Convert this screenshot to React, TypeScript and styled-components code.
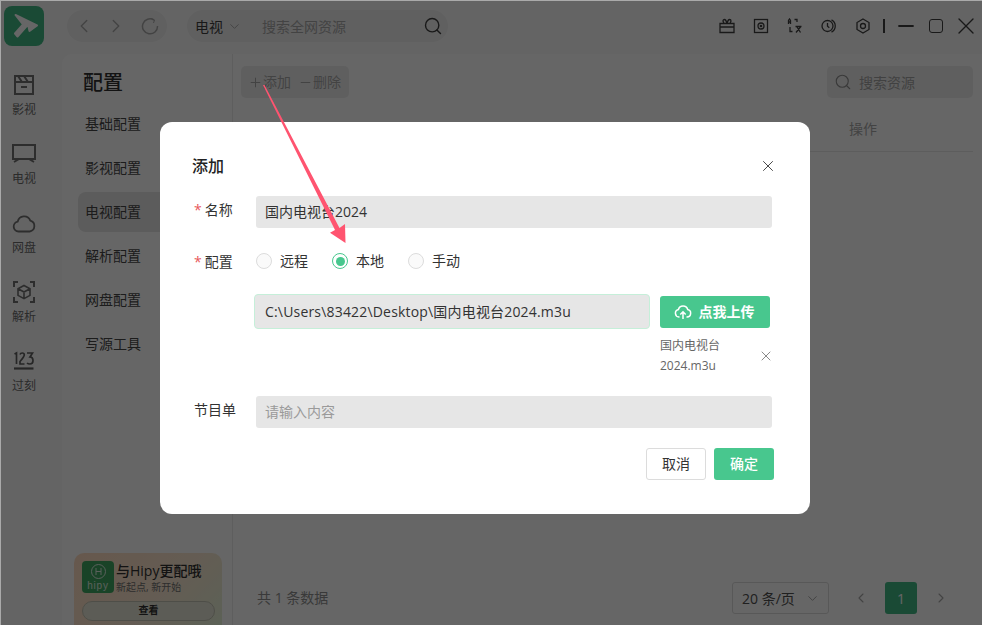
import React, { FunctionComponent } from "react";
import styled, { createGlobalStyle } from "styled-components";
import { ChevronDown, ChevronLeft, ChevronRight, Search, X, Plus, Minus } from "lucide-react";

const GlobalStyle = createGlobalStyle`
  html, body {
    margin: 0;
    padding: 0;
    height: 100%;
    overflow: hidden;
  }
  body {
    font-family: "Open Sans", "Noto Sans CJK SC", sans-serif;
    color: #222;
  }
  * {
    box-sizing: border-box;
  }
`;

const rail = [
  {
    label: "影视",
    icon: (
      <svg width="22" height="22" viewBox="0 0 22 22" fill="none" stroke="#707070" strokeWidth="2">
        <rect x="2" y="2" width="18" height="18" />
        <path d="M2 8h18M5 2l4 6M11 2l4 6M8 13h6" />
      </svg>
    ),
  },
  {
    label: "电视",
    icon: (
      <svg width="26" height="22" viewBox="0 0 26 22" fill="none" stroke="#707070" strokeWidth="2">
        <rect x="2" y="2" width="22" height="14" />
        <path d="M3 19l5-3M23 19l-5-3" />
      </svg>
    ),
  },
  {
    label: "网盘",
    icon: (
      <svg width="24" height="20" viewBox="0 0 24 20" fill="none" stroke="#707070" strokeWidth="1.8">
        <path d="M6.5 18.5a5 5 0 0 1-.8-9.9 6.6 6.6 0 0 1 12.6-1 5.6 5.6 0 0 1-.6 10.9z" />
      </svg>
    ),
  },
  {
    label: "解析",
    icon: (
      <svg width="24" height="24" viewBox="0 0 24 24" fill="none" stroke="#707070" strokeWidth="2">
        <path d="M2 7V2h4M18 2h4v5M2 17v5h4M22 17v5h-4" />
        <path d="M12 5.5l6 3.3v6.6l-6 3.3-6-3.3V8.8zM6.5 9l5.5 3 5.5-3M12 12v6" strokeWidth="1.6" />
      </svg>
    ),
  },
  {
    label: "过刻",
    icon: (
      <svg width="22" height="20" viewBox="0 0 22 20" fill="none" stroke="#606060" strokeWidth="1.7">
        <path d="M1.500 3l2-1v11M7 3.500q.5-1.500 2.300-1.500 2 0 2 2 0 1.500-4.300 6.500v2.500h4.500M14 2h5.500l-2.500 4q3 0 3 3.500T17 13q-2 0-3-1" />
        <path d="M1 17.500h19.500" strokeWidth="2.200" />
      </svg>
    ),
  },
];

const menuItems = ["基础配置", "影视配置", "电视配置", "解析配置", "网盘配置", "写源工具"];

export default function App() {
  return (
    <Page>
      <GlobalStyle />
      <Rail>
        <Logo>
          <svg width="40" height="40" viewBox="0 0 40 40">
            <path
              d="M11.500 9L33 19.500 25.500 25 24 18.500 13.500 30.500 11 27.500 19 18.500z"
              fill="#fff"
              stroke="#fff"
              strokeWidth="2"
              strokeLinejoin="round"
            />
          </svg>
        </Logo>
        <RailNav>
          {rail.map((item) => (
            <RailItem key={item.label}>
              <RailIcon>{item.icon}</RailIcon>
              <RailLabel>{item.label}</RailLabel>
            </RailItem>
          ))}
        </RailNav>
      </Rail>
      <Body>
        <TopBar>
          <NavPill>
            <ChevronLeft size={22} strokeWidth={1.5} color="#a8a8a8" />
            <ChevronRight size={22} strokeWidth={1.5} color="#a8a8a8" />
            <svg width="18" height="18" viewBox="0 0 18 18" fill="none" stroke="#a8a8a8" strokeWidth="1.500">
              <path d="M13 3a7.500 7.500 0 1 0 3.500 6" />
              <path d="M10 1.500l3.500 1.500-1 3" strokeWidth="1" />
            </svg>
          </NavPill>
          <SearchPill>
            <SearchType>电视</SearchType>
            <ChevronDown size={15} strokeWidth={1.500} color="#a8a8a8" />
            <SearchHint>搜索全网资源</SearchHint>
            <Search size={20} strokeWidth={1.700} color="#404040" />
          </SearchPill>
          <WinTools>
            <ToolIcon viewBox="0 0 16 16">
              <path d="M1 5.500h14V14.500H1zM1 9h14M5 5.500L4 3q0-1.500 1.500-1.500T8 5.500q1-4 2.500-4T12 3l-1 2.500" />
            </ToolIcon>
            <ToolIcon viewBox="0 0 16 16">
              <rect x="1.500" y="1.500" width="13" height="13" />
              <circle cx="8" cy="8" r="3" />
              <circle cx="8" cy="8" r=".7" />
            </ToolIcon>
            <ToolIcon viewBox="0 0 16 16">
              <path d="M1.500 6V2.500l1-1.500 1 1.500V6M1.500 4h2M7.500 1.500H10v2.500M3 9v4.500h2.500M8.500 8.500h6M10 9l3.500 5.500M13.500 9L9 14.500" />
            </ToolIcon>
            <ToolIcon viewBox="0 0 16 16">
              <circle cx="6.500" cy="8" r="5.500" />
              <path d="M6.500 5v3.200l1.800 1.500M10.500 1.800a7 7 0 0 1 0 12.400" />
            </ToolIcon>
            <ToolIcon viewBox="0 0 16 16">
              <path d="M8 1l6 3.500v7L8 15l-6-3.500v-7z" />
              <circle cx="8" cy="8" r="2.500" />
            </ToolIcon>
            <WinDivider />
            <WinButtons>
              <Minus size={24} strokeWidth={1.800} color="#404040" />
              <MaxBox />
              <X size={28} strokeWidth={1.200} color="#404040" />
            </WinButtons>
          </WinTools>
        </TopBar>
        <Panel>
          <SideMenu>
            <SideTitle>配置</SideTitle>
            <MenuList>
              {menuItems.map((item) => (
                <MenuItem key={item} $active={item === "电视配置"}>
                  {item}
                </MenuItem>
              ))}
            </MenuList>
            <Promo>
              <PromoTop>
                <PromoLogo>
                  <svg width="17" height="17" viewBox="0 0 17 17" fill="none" stroke="#e0f0e4" strokeWidth="1">
                    <circle cx="8.500" cy="8.500" r="7" />
                    <path d="M6 5v7M11 5v7M6 8.500h5" />
                  </svg>
                  <span>hipy</span>
                </PromoLogo>
                <div>
                  <PromoTitle>与Hipy更配哦</PromoTitle>
                  <PromoSub>新起点, 新开始</PromoSub>
                </div>
              </PromoTop>
              <PromoButton>查看</PromoButton>
            </Promo>
          </SideMenu>
          <Main>
            <MainBar>
              <ActionGroup>
                <Action>
                  <Plus size={15} strokeWidth={1.600} />
                  添加
                </Action>
                <Action>
                  <Minus size={15} strokeWidth={1.600} />
                  删除
                </Action>
              </ActionGroup>
              <TableSearch>
                <Search size={18} strokeWidth={1.500} color="#909090" />
                搜索资源
              </TableSearch>
            </MainBar>
            <TableHead>
              <span>操作</span>
            </TableHead>
            <TableFill />
            <Footer>
              <Total>共 1 条数据</Total>
              <Pager>
                <PageSize>
                  20 条/页
                  <ChevronDown size={15} strokeWidth={1.500} color="#a0a0a0" />
                </PageSize>
                <PageArrows>
                  <ChevronLeft size={16} strokeWidth={1.600} color="#a8a8a8" />
                  <PageCurrent>1</PageCurrent>
                  <ChevronRight size={16} strokeWidth={1.600} color="#a8a8a8" />
                </PageArrows>
              </Pager>
            </Footer>
          </Main>
        </Panel>
      </Body>
      <Backdrop />
      <AddDialog />
      <Arrow viewBox="0 0 982 625">
        <path d="M263 85L264.500 85L339.500 228L345 224L345.500 243L330 232.700L335 230z" fill="#ff5470" />
      </Arrow>
    </Page>
  );
}

const AddDialog: FunctionComponent = () => (
  <Dialog>
    <DialogHeader>
      <DialogTitle>添加</DialogTitle>
      <X size={18} strokeWidth={1.300} color="#444" />
    </DialogHeader>
    <Row $top={18}>
      <Label $required>名称</Label>
      <Input>国内电视台2024</Input>
    </Row>
    <RadioRow>
      <Label $required>配置</Label>
      <Radio>
        <RadioDot />
        <RadioText>远程</RadioText>
      </Radio>
      <Radio>
        <RadioDot $checked />
        <RadioText>本地</RadioText>
      </Radio>
      <Radio>
        <RadioDot />
        <RadioText>手动</RadioText>
      </Radio>
    </RadioRow>
    <UploadRow>
      <PathInput>C:\Users\83422\Desktop\国内电视台2024.m3u</PathInput>
      <UploadCol>
        <UploadButton>
          <svg width="18" height="18" viewBox="0 0 18 18" fill="none" stroke="#fff" strokeWidth="1.500">
            <path d="M5.500 14H5a3.800 3.800 0 0 1-.6-7.500 4.800 4.800 0 0 1 9.300 0A3.800 3.800 0 0 1 13 14h-.5" />
            <path d="M9 16V9M6.300 11.500L9 8.800l2.700 2.700" />
          </svg>
          <span>点我上传</span>
        </UploadButton>
        <FileEntry>
          <FileName>国内电视台2024.m3u</FileName>
          <X size={16} strokeWidth={1.300} color="#777" />
        </FileEntry>
      </UploadCol>
    </UploadRow>
    <Row $top={20}>
      <Label>节目单</Label>
      <Input $placeholder>请输入内容</Input>
    </Row>
    <DialogFooter>
      <CancelButton>取消</CancelButton>
      <ConfirmButton>确定</ConfirmButton>
    </DialogFooter>
  </Dialog>
);

const Page = styled.div`
  position: relative;
  width: 982px;
  height: 625px;
  display: flex;
  overflow: hidden;
  background: #fbfbfb;
`;

const Rail = styled.div`
  width: 62px;
  flex-shrink: 0;
  display: flex;
  flex-direction: column;
  padding: 6px 0 0 4px;
`;

const Logo = styled.div`
  width: 40px;
  height: 40px;
  border-radius: 8px;
  background: #42b884;
  overflow: hidden;
  svg {
    display: block;
  }
`;

const RailNav = styled.div`
  display: flex;
  flex-direction: column;
  margin-top: 27px;
  gap: 22px;
`;

const RailItem = styled.div`
  width: 40px;
  display: flex;
  flex-direction: column;
  align-items: center;
`;

const RailIcon = styled.div`
  height: 24px;
  margin-bottom: 3px;
  display: flex;
  align-items: center;
  justify-content: center;
`;

const RailLabel = styled.div`
  font-size: 12px;
  line-height: 20px;
  color: #6c6c6c;
`;

const Body = styled.div`
  flex: 1;
  min-width: 0;
  display: flex;
  flex-direction: column;
`;

const TopBar = styled.div`
  height: 54px;
  flex-shrink: 0;
  display: flex;
  align-items: flex-start;
  padding: 10px 0 0 5px;
`;

const NavPill = styled.div`
  width: 100px;
  height: 32px;
  border-radius: 16px;
  background: #f0f0f0;
  display: flex;
  align-items: center;
  gap: 10px;
  padding-left: 6px;
  svg:last-child {
    margin-left: 4px;
  }
`;

const SearchPill = styled.div`
  width: 261px;
  height: 32px;
  margin-left: 20px;
  border-radius: 16px;
  background: #f0f0f0;
  display: flex;
  align-items: center;
  padding: 0 5px 0 8px;
`;

const SearchType = styled.span`
  font-size: 14px;
  color: #404040;
  margin-right: 4px;
`;

const SearchHint = styled.span`
  flex: 1;
  margin-left: 20px;
  font-size: 14px;
  color: #a8a8a8;
`;

const WinTools = styled.div`
  margin-left: auto;
  height: 32px;
  display: flex;
  align-items: center;
  gap: 18px;
  padding-right: 2px;
`;

const ToolIcon = styled.svg`
  width: 16px;
  height: 16px;
  fill: none;
  stroke: #404040;
  stroke-width: 1.300;
`;

const WinDivider = styled.div`
  width: 2px;
  height: 14px;
  margin: 0 -9px 0 -6px;
  background: #404040;
`;

const WinButtons = styled.div`
  display: flex;
  align-items: center;
  gap: 10px;
`;

const MaxBox = styled.div`
  width: 14px;
  height: 14px;
  border: 1.500px solid #404040;
  border-radius: 3px;
  margin: 0 -1px 0 1px;
`;

const Panel = styled.div`
  flex: 1;
  min-height: 0;
  display: flex;
  background: #fff;
  border-radius: 10px 0 0 0;
`;

const SideMenu = styled.div`
  width: 171px;
  flex-shrink: 0;
  display: flex;
  flex-direction: column;
  border-right: 1px solid #eaeaea;
  padding: 15px 10px 0 16px;
`;

const SideTitle = styled.div`
  font-size: 20px;
  line-height: 28px;
  font-weight: 500;
  color: #303030;
  padding-left: 5px;
`;

const MenuList = styled.div`
  margin-top: 7px;
  display: flex;
  flex-direction: column;
  gap: 4px;
`;

const MenuItem = styled.div<{ $active?: boolean }>`
  height: 40px;
  border-radius: 8px;
  display: flex;
  align-items: center;
  padding: 0 0 2px 7px;
  font-size: 14px;
  color: #484848;
  background: ${(p) => (p.$active ? "#e5e5e5" : "transparent")};
`;

const Promo = styled.div`
  margin-top: auto;
  margin-left: -4px;
  height: 72px;
  border-radius: 10px 10px 0 0;
  background: linear-gradient(135deg, #ffdcc0 0%, #fbe6d0 55%, #e6f3d8 100%);
  padding: 8px 7px 0 8px;
`;

const PromoTop = styled.div`
  display: flex;
  gap: 2px;
`;

const PromoLogo = styled.div`
  width: 32px;
  height: 32px;
  border-radius: 4px;
  background: #3fa862;
  display: flex;
  flex-direction: column;
  align-items: center;
  padding-top: 2px;
  span {
    font-family: "Liberation Sans", sans-serif;
    font-size: 10px;
    line-height: 11px;
    letter-spacing: 0.8px;
    color: #e0f0e4;
  }
`;

const PromoTitle = styled.div`
  font-size: 14px;
  line-height: 19px;
  font-weight: 500;
  color: #303030;
  white-space: nowrap;
`;

const PromoSub = styled.div`
  margin-top: 1px;
  font-size: 10px;
  line-height: 13px;
  color: #707070;
`;

const PromoButton = styled.div`
  margin-top: 7px;
  height: 20px;
  border-radius: 10px;
  border: 1.500px solid #c4c4b4;
  background: #e6e6d8;
  font-size: 10px;
  font-weight: 700;
  line-height: 16px;
  text-align: center;
  color: #303030;
`;

const Main = styled.div`
  flex: 1;
  min-width: 0;
  display: flex;
  flex-direction: column;
  padding: 12px 9px 0 8px;
`;

const MainBar = styled.div`
  display: flex;
  justify-content: space-between;
  align-items: center;
`;

const ActionGroup = styled.div`
  width: 108px;
  height: 32px;
  border-radius: 5px;
  background: #eeeeee;
  display: flex;
  align-items: center;
  gap: 7px;
  padding: 0 0 2px 7px;
`;

const Action = styled.div`
  display: flex;
  align-items: center;
  font-size: 14px;
  color: #a8a8a8;
  svg {
    margin-top: 2px;
  }
`;

const TableSearch = styled.div`
  width: 146px;
  height: 32px;
  border-radius: 5px;
  background: #eeeeee;
  display: flex;
  align-items: center;
  gap: 7px;
  padding: 0 7px;
  font-size: 14px;
  color: #a4a4a4;
`;

const TableHead = styled.div`
  height: 43px;
  margin-top: 11px;
  border-bottom: 1px solid #e8e8e8;
  display: flex;
  align-items: center;
  padding-bottom: 5px;
  font-size: 14px;
  color: #a8a8a8;
  span {
    margin-left: 608px;
  }
`;

const TableFill = styled.div`
  flex: 1;
`;

const Footer = styled.div`
  height: 61px;
  flex-shrink: 0;
  display: flex;
  align-items: flex-start;
  justify-content: space-between;
  padding: 18px 24px 0 16px;
`;

const Total = styled.div`
  font-size: 14px;
  line-height: 32px;
  color: #909090;
`;

const Pager = styled.div`
  display: flex;
  align-items: center;
  gap: 24px;
`;

const PageSize = styled.div`
  width: 97px;
  height: 32px;
  border: 1px solid #dcdcdc;
  border-radius: 3px;
  display: flex;
  align-items: center;
  justify-content: space-between;
  padding: 0 8px 0 9px;
  font-size: 14px;
  color: #505050;
`;

const PageArrows = styled.div`
  display: flex;
  align-items: center;
  gap: 16px;
`;

const PageCurrent = styled.div`
  width: 32px;
  height: 32px;
  border-radius: 3px;
  background: #42b884;
  display: flex;
  align-items: center;
  justify-content: center;
  font-size: 14px;
  color: #fff;
`;

const Backdrop = styled.div`
  position: absolute;
  inset: 0;
  background: rgba(0, 0, 0, 0.6);
  box-shadow: inset 1px 1px 0 #aaa;
`;

const Dialog = styled.div`
  position: absolute;
  left: 160px;
  top: 122px;
  width: 650px;
  height: 392px;
  border-radius: 12px;
  background: #fff;
  padding: 32px 36px 0 32px;
`;

const DialogHeader = styled.div`
  height: 24px;
  display: flex;
  align-items: center;
  justify-content: space-between;
  svg {
    margin-right: -3px;
  }
`;

const DialogTitle = styled.div`
  font-size: 16px;
  font-weight: 500;
  color: #222;
  margin-top: -2px;
`;

const Row = styled.div<{ $top: number }>`
  display: flex;
  align-items: center;
  height: 32px;
  margin-top: ${(p) => p.$top}px;
`;

const Label = styled.div<{ $required?: boolean }>`
  width: 64px;
  flex-shrink: 0;
  font-size: 14px;
  color: #333;
  padding-left: 2px;
  margin-top: -7px;
  &::before {
    content: ${(p) => (p.$required ? '"*"' : "none")};
    color: #e8585c;
    margin-right: 3px;
  }
`;

const Input = styled.div<{ $placeholder?: boolean }>`
  flex: 1;
  height: 32px;
  margin-right: 2px;
  border-radius: 3px;
  background: #e6e6e6;
  display: flex;
  align-items: center;
  padding: 0 0 3px 9px;
  font-size: 14px;
  color: ${(p) => (p.$placeholder ? "#9a9a9a" : "#333")};
`;

const RadioRow = styled.div`
  display: flex;
  align-items: center;
  height: 32px;
  margin-top: 17px;
  ${Label} {
    margin-top: -1px;
  }
`;

const Radio = styled.div`
  display: flex;
  align-items: center;
  gap: 8px;
  margin-right: 24px;
  font-size: 14px;
  color: #333;
`;

const RadioText = styled.span`
  margin-top: -2px;
`;

const RadioDot = styled.div<{ $checked?: boolean }>`
  width: 16px;
  height: 16px;
  border-radius: 50%;
  border: 1px solid ${(p) => (p.$checked ? "#48c78e" : "#dcdcdc")};
  background: ${(p) => (p.$checked ? "#fff" : "#fafafa")};
  display: flex;
  align-items: center;
  justify-content: center;
  &::after {
    content: "";
    display: ${(p) => (p.$checked ? "block" : "none")};
    width: 9px;
    height: 9px;
    border-radius: 50%;
    background: #48c78e;
  }
`;

const UploadRow = styled.div`
  display: flex;
  margin-top: 19px;
  padding-left: 62px;
`;

const PathInput = styled.div`
  width: 396px;
  height: 35px;
  margin-top: -2px;
  border-radius: 4px;
  border: 1px solid #c5efd9;
  background: #e6e6e6;
  display: flex;
  align-items: center;
  padding: 0 0 2px 10px;
  font-size: 14px;
  letter-spacing: 0.18px;
  color: #333;
`;

const UploadCol = styled.div`
  width: 110px;
  margin-left: 10px;
  display: flex;
  flex-direction: column;
`;

const UploadButton = styled.div`
  height: 32px;
  border-radius: 3px;
  background: #48c78e;
  display: flex;
  align-items: center;
  justify-content: center;
  gap: 7px;
  padding-right: 2px;
  font-size: 14px;
  font-weight: 700;
  color: #fff;
  span {
    margin-top: -2px;
  }
`;

const FileEntry = styled.div`
  margin-top: 8px;
  display: flex;
  align-items: center;
  justify-content: space-between;
  svg {
    margin-right: -4px;
  }
`;

const FileName = styled.div`
  width: 66px;
  font-size: 12px;
  line-height: 20px;
  color: #666;
  word-break: break-all;
`;

const DialogFooter = styled.div`
  display: flex;
  justify-content: flex-end;
  gap: 8px;
  margin-top: 20px;
`;

const CancelButton = styled.div`
  width: 60px;
  height: 32px;
  border-radius: 3px;
  border: 1px solid #dcdcdc;
  display: flex;
  align-items: center;
  justify-content: center;
  padding-bottom: 2px;
  font-size: 14px;
  color: #333;
`;

const ConfirmButton = styled.div`
  width: 60px;
  height: 32px;
  border-radius: 3px;
  background: #48c78e;
  display: flex;
  align-items: center;
  justify-content: center;
  padding-bottom: 2px;
  font-size: 14px;
  font-weight: 500;
  color: #fff;
`;

const Arrow = styled.svg`
  position: absolute;
  inset: 0;
  width: 982px;
  height: 625px;
  pointer-events: none;
`;
